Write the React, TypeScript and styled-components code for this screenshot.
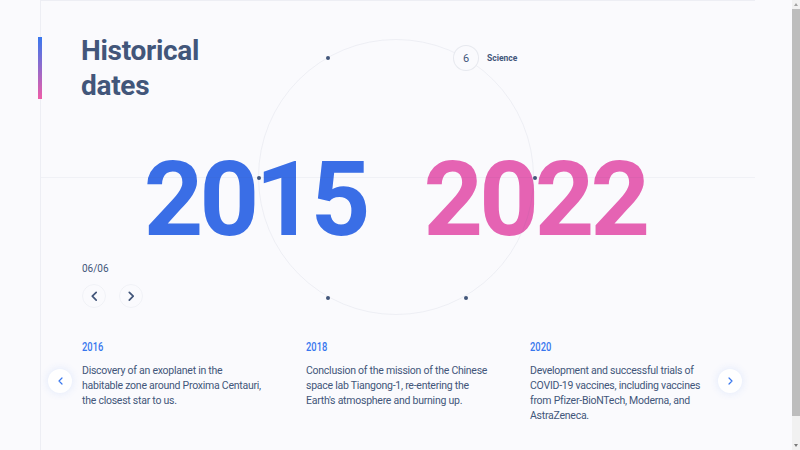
import React from "react";
import styled, { createGlobalStyle } from "styled-components";

const Global = createGlobalStyle`
  html, body { margin: 0; padding: 0; background: #fafafd; overflow: hidden; }
  body { font-family: Roboto, "Noto Sans", sans-serif; color: #42567a; }
`;

const Page = styled.div`
  display: flex;
  height: 450px;
  overflow: hidden;
`;

const Content = styled.div`
  flex: 1;
  min-width: 0;
`;

const Scrollbar = styled.div`
  flex: none;
  width: 8px;
  height: 450px;
  background: #f1f1f1;
  display: flex;
  flex-direction: column;
  align-items: center;
`;

const ScrollArrow = styled.div<{ $down?: boolean }>`
  flex: none;
  width: 0;
  height: 0;
  margin: 3px 0;
  border-left: 2.5px solid transparent;
  border-right: 2.5px solid transparent;
  ${(p) =>
    p.$down
      ? "border-top: 3px solid #7a7a7a; margin-top: auto;"
      : "border-bottom: 3px solid #a3a3a3;"}
`;

const ScrollThumb = styled.div`
  width: 8px;
  height: 407px;
  background: #bdbdbd;
`;

const Frame = styled.main`
  position: relative;
  margin-left: 40px;
  width: 714px;
  height: 449px;
  border-left: 1px solid rgba(66, 86, 122, 0.07);
  border-top: 1px solid rgba(66, 86, 122, 0.07);
`;

const CrossLine = styled.div`
  position: absolute;
  left: 0;
  right: 0;
  top: 176px;
  height: 1px;
  background: rgba(66, 86, 122, 0.05);
`;

const Header = styled.header`
  display: flex;
  align-items: flex-start;
  padding-top: 32px;
`;

const GradientBar = styled.div`
  width: 4px;
  height: 62px;
  margin-left: -3px;
  margin-top: 4px;
  background: linear-gradient(180deg, #3877ee 0%, #ef5da8 100%);
`;

const Title = styled.h1`
  margin: 0 0 0 39px;
  font-size: 28px;
  line-height: 35px;
  font-weight: 700;
  letter-spacing: -0.3px;
  color: #42567a;
`;

const YearsRow = styled.div`
  display: flex;
  justify-content: center;
  gap: 57px;
  margin-top: 45px;
  padding-right: 6px;
`;

const Year = styled.span<{ $color: string }>`
  font-size: 104px;
  line-height: 1;
  font-weight: 700;
  letter-spacing: -4px;
  color: ${(p) => p.$color};
`;

const Controls = styled.div`
  display: flex;
  flex-direction: column;
  gap: 9px;
  margin-top: 11px;
  padding-left: 41px;
`;

const Counter = styled.div`
  font-size: 10px;
  line-height: 12px;
  color: #42567a;
`;

const NavButtons = styled.div`
  display: flex;
  gap: 13px;
`;

const NavButton = styled.button`
  width: 24px;
  height: 24px;
  border-radius: 50%;
  border: 1px solid rgba(66, 86, 122, 0.05);
  background: transparent;
  padding: 0;
  display: flex;
  align-items: center;
  justify-content: center;
  color: #42567a;
`;

const Slider = styled.section`
  display: flex;
  align-items: center;
  margin-top: 31px;
  padding-left: 7px;
`;

const SlideArrow = styled.button`
  flex: none;
  width: 24px;
  height: 24px;
  border-radius: 50%;
  border: none;
  background: #fff;
  box-shadow: 0 0 8px rgba(56, 119, 238, 0.14);
  padding: 0;
  display: flex;
  align-items: center;
  justify-content: center;
  color: #3877ee;
`;

const Cards = styled.div`
  display: flex;
  gap: 41px;
  margin: 0 5px 0 10px;
`;

const Card = styled.article`
  width: 183px;
  display: flex;
  flex-direction: column;
  gap: 8px;
`;

const CardYear = styled.div`
  font-size: 13px;
  line-height: 16px;
  font-weight: 500;
  color: #3877ee;
  transform: scaleX(0.72);
  transform-origin: left center;
`;

const CardText = styled.p`
  margin: 0;
  font-size: 10.5px;
  line-height: 15px;
  letter-spacing: -0.25px;
  color: #42567a;
`;

const Circle = styled.div`
  position: absolute;
  left: 217px;
  top: 38px;
  width: 276px;
  height: 276px;
  border-radius: 50%;
  border: 1px solid rgba(66, 86, 122, 0.07);
  box-sizing: border-box;
`;

const Dot = styled.div`
  position: absolute;
  width: 4px;
  height: 4px;
  margin: -2px 0 0 -2px;
  border-radius: 50%;
  background: #42567a;
`;

const ActivePoint = styled.div`
  position: absolute;
  width: 26px;
  height: 26px;
  margin: -13px 0 0 -13px;
  border-radius: 50%;
  background: #fafafd;
  border: 1px solid rgba(66, 86, 122, 0.1);
  box-sizing: border-box;
  display: flex;
  align-items: center;
  justify-content: center;
  font-size: 11px;
  color: #42567a;
`;

const PointLabel = styled.span`
  position: absolute;
  left: calc(100% + 9px);
  top: 50%;
  transform: translateY(-50%);
  font-size: 8.5px;
  font-weight: 700;
  color: #42567a;
  white-space: nowrap;
`;

const Chevron = ({ dir, size = 8, weight = 1.2 }: { dir: "left" | "right"; size?: number; weight?: number }) => (
  <svg width={size} height={size * 1.6} viewBox="0 0 5 8" fill="none">
    <polyline
      points={dir === "left" ? "4,1 1,4 4,7" : "1,1 4,4 1,7"}
      stroke="currentColor"
      strokeWidth={weight}
      strokeLinecap="round"
      strokeLinejoin="round"
    />
  </svg>
);

const events = [
  { year: "2016", text: "Discovery of an exoplanet in the habitable zone around Proxima Centauri, the closest star to us." },
  { year: "2018", text: "Conclusion of the mission of the Chinese space lab Tiangong-1, re-entering the Earth's atmosphere and burning up." },
  { year: "2020", text: "Development and successful trials of COVID-19 vaccines, including vaccines from Pfizer-BioNTech, Moderna, and AstraZeneca." },
];

const R = 138;
const pos = (deg: number) => {
  const a = (deg * Math.PI) / 180;
  return { left: 138 + R * Math.cos(a), top: 138 + R * Math.sin(a) };
};

export default function App() {
  return (
    <Page>
      <Global />
      <Content>
        <Frame>
          <CrossLine />
          <Header>
            <GradientBar />
            <Title>
              Historical
              <br />
              dates
            </Title>
          </Header>
          <YearsRow>
            <Year $color="#3a6ee6">2015</Year>
            <Year $color="#e563b3">2022</Year>
          </YearsRow>
          <Controls>
            <Counter>06/06</Counter>
            <NavButtons>
              <NavButton aria-label="previous">
                <Chevron dir="left" size={6.5} weight={1.3} />
              </NavButton>
              <NavButton aria-label="next">
                <Chevron dir="right" size={6.5} weight={1.3} />
              </NavButton>
            </NavButtons>
          </Controls>
          <Slider>
            <SlideArrow aria-label="previous slide">
              <Chevron dir="left" size={5} />
            </SlideArrow>
            <Cards>
              {events.map((e) => (
                <Card key={e.year}>
                  <CardYear>{e.year}</CardYear>
                  <CardText>{e.text}</CardText>
                </Card>
              ))}
            </Cards>
            <SlideArrow aria-label="next slide">
              <Chevron dir="right" size={5} />
            </SlideArrow>
          </Slider>
          <Circle>
            {[0, 60, 120, 180, 240].map((d) => (
              <Dot key={d} style={pos(d)} />
            ))}
            <ActivePoint style={pos(-60)}>
              6<PointLabel>Science</PointLabel>
            </ActivePoint>
          </Circle>
        </Frame>
      </Content>
      <Scrollbar>
        <ScrollArrow />
        <ScrollThumb />
        <ScrollArrow $down />
      </Scrollbar>
    </Page>
  );
}
